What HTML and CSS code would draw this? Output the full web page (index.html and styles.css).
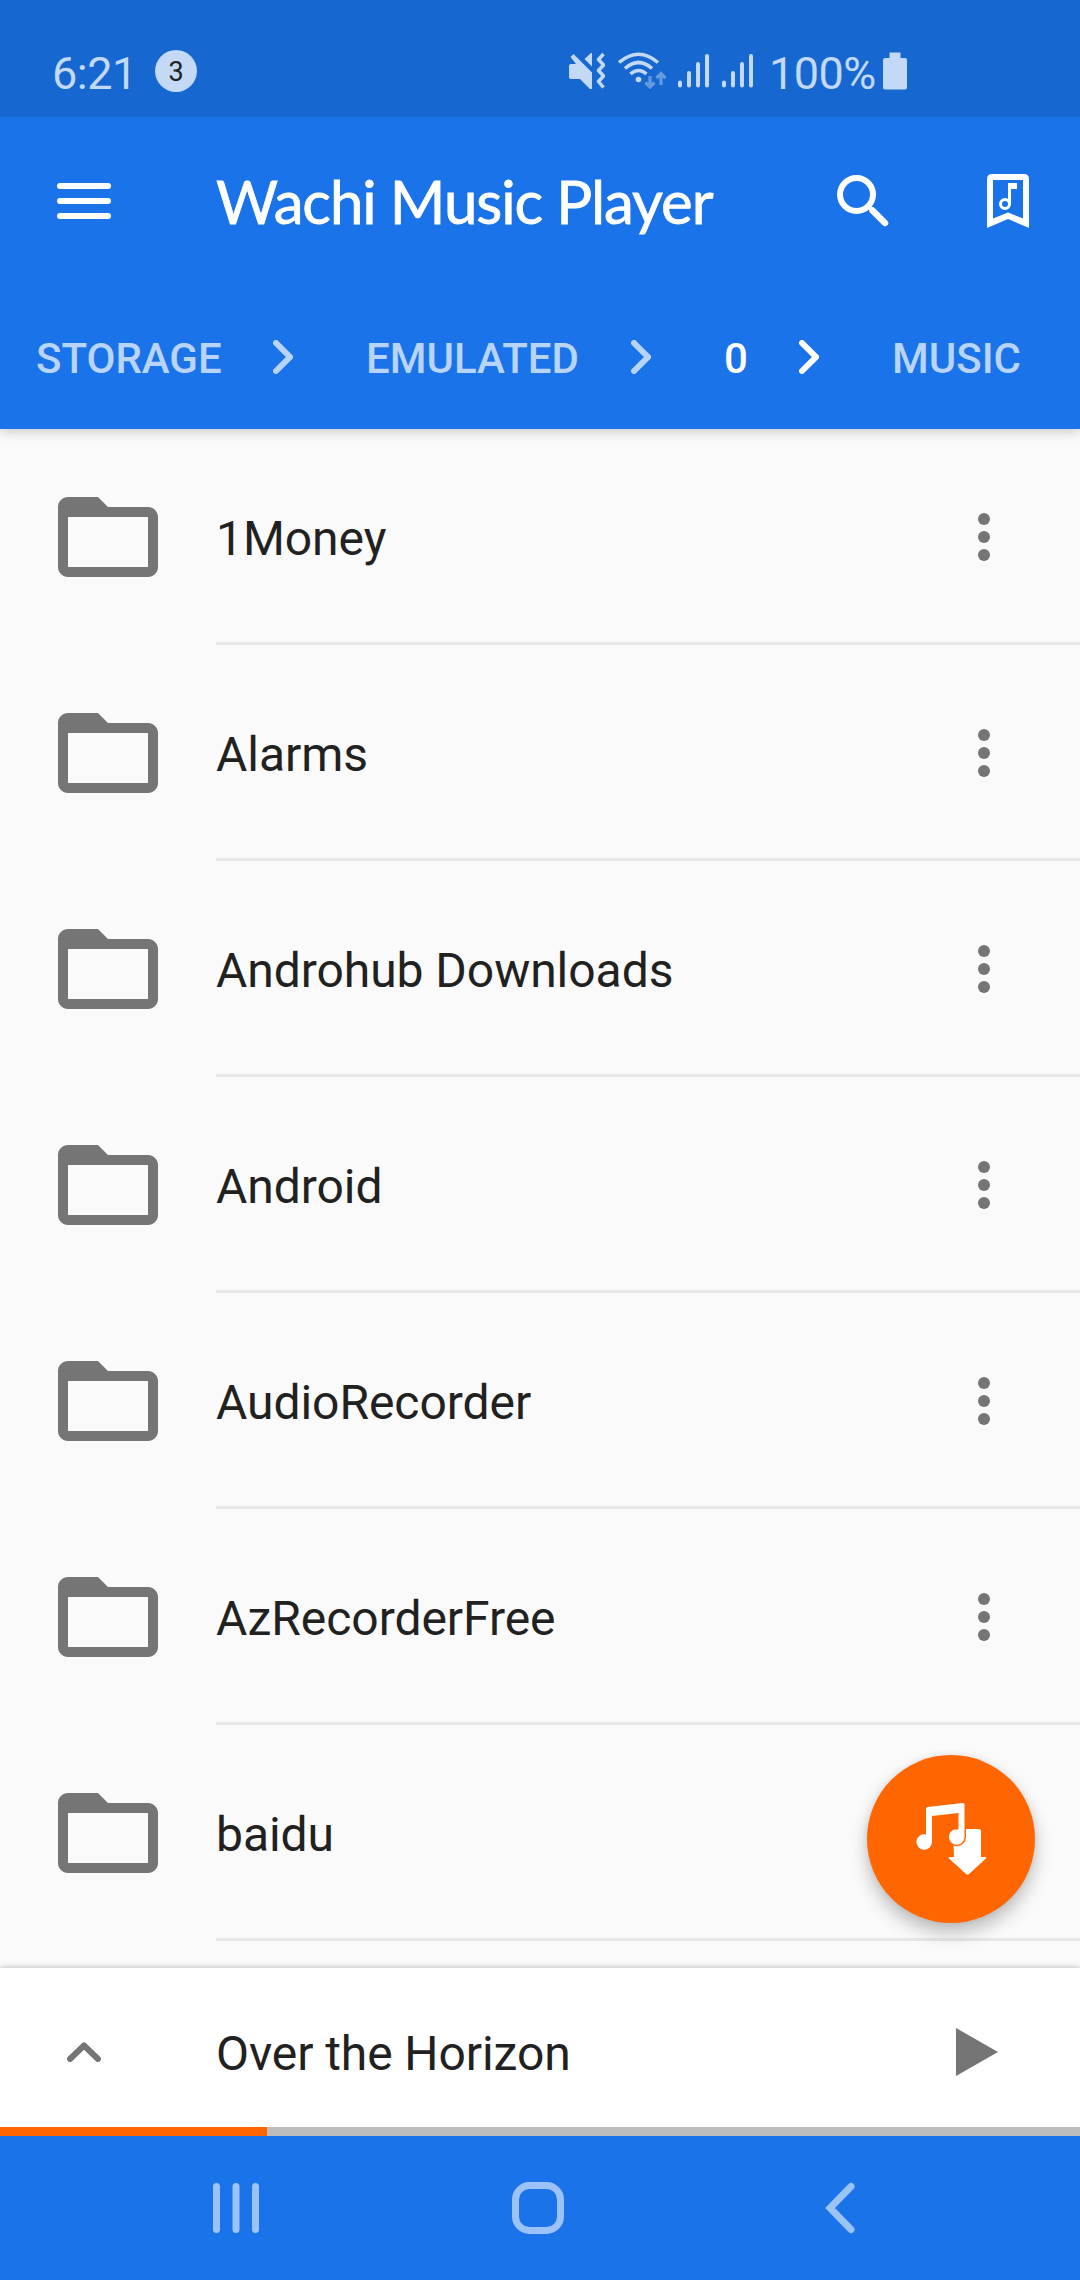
FILE: index.html
```html
<!DOCTYPE html>
<html lang="en">
<head>
<meta charset="utf-8">
<title>Wachi Music Player</title>
<link rel="stylesheet" href="styles.css">
</head>
<body>
<svg class="defs" width="0" height="0" aria-hidden="true">
  <symbol id="folder" viewBox="0 0 24 24"><path d="M20 6h-8l-2-2H4c-1.100 0-2 .9-2 2v12c0 1.100.9 2 2 2h16c1.100 0 2-.9 2-2V8c0-1.100-.9-2-2-2zm0 12H4V8h16v10z"/></symbol>
  <symbol id="more" viewBox="0 0 12 48"><circle cx="6" cy="6" r="6"/><circle cx="6" cy="24" r="6"/><circle cx="6" cy="42" r="6"/></symbol>
  <symbol id="chevron" viewBox="0 0 20 34"><path d="M3 3l14 14L3 31" fill="none" stroke="currentColor" stroke-width="6" stroke-linecap="round"/></symbol>
  <symbol id="signal" viewBox="0 0 32 36"><path d="M2 29.500V32.500M11 20V32.500M20 11V32.500M29 3V32.500" fill="none" stroke="currentColor" stroke-width="4" stroke-linecap="round"/></symbol>
</svg>

<header class="top">
  <div class="status">
    <span class="time">6:21</span>
    <span class="count">3</span>
    <div class="status-icons">
      <svg class="mute" viewBox="0 0 36 38" width="36" height="38"><path fill="currentColor" d="M0 14q0-2 2-2h5L1.500 5 4.500 2 23 20.500V37h-2L11 27H2q-2 0-2-2zM15.500 7L22 1h1v13.500z"/><path d="M34.500 2l-5 5.500 5 5.500-5 5.500 5 5.500-5 5.500 5 6" fill="none" stroke="currentColor" stroke-width="3.500" stroke-linejoin="round"/></svg>
      <svg class="wifi" viewBox="0 0 48 38" width="48" height="38"><g fill="none" stroke="currentColor" stroke-width="3.600"><path d="M1 10.500Q20.500-6 40 10.500M7 16.500Q20.500 4.500 34 16.500M12.500 22Q20.500 15 28.500 22"/></g><circle cx="20.500" cy="27.500" r="2.800" fill="currentColor"/><g class="traffic" fill="none" stroke="currentColor" stroke-width="3.200"><path d="M32 24v10M27.500 30.500l4.500 4.500 4.500-4.500M43 33V22M38.500 26l4.500-4.500 4.500 4.500"/></g></svg>
      <svg class="signal" width="32" height="36"><use href="#signal"/></svg>
      <svg class="signal second" width="32" height="36"><use href="#signal"/></svg>
      <span class="percent">100%</span>
      <svg class="battery" viewBox="0 0 24 38" width="24" height="38"><path fill="currentColor" d="M6.500 0.500h11V6H22q2 0 2 2v27.500q0 2-2 2H2q-2 0-2-2V8q0-2 2-2h4.500z"/></svg>
    </div>
  </div>
  <div class="toolbar">
    <svg class="menu" viewBox="0 0 54 36" width="54" height="36"><path d="M3 3h48M3 18h48M3 33h48" stroke="#fff" stroke-width="6" stroke-linecap="round"/></svg>
    <h1>Wachi Music Player</h1>
    <svg class="search" viewBox="0 0 52 52" width="52" height="52"><circle cx="19.500" cy="19.500" r="16.500" fill="none" stroke="#fff" stroke-width="6"/><path d="M31 31l4.500 4.500" stroke="#fff" stroke-width="4"/><path d="M35.500 35.500L48 48" stroke="#fff" stroke-width="6.500" stroke-linecap="round"/></svg>
    <svg class="bookmark" viewBox="0 0 42 54" width="42" height="54"><path fill="#fff" fill-rule="evenodd" d="M5 0h32q5 0 5 5v49l-21-9-21 9V5q0-5 5-5zM6 6v38.500l15-6 15 6V6z"/><circle cx="18" cy="30" r="4.500" fill="none" stroke="#fff" stroke-width="3"/><path fill="#fff" d="M21 9h9v6h-6v15h-3z"/></svg>
  </div>
  <nav class="crumbs">
    <span class="c1">STORAGE</span><svg width="20" height="34"><use href="#chevron"/></svg>
    <span class="c2">EMULATED</span><svg width="20" height="34"><use href="#chevron"/></svg>
    <span class="c3 current">0</span><svg class="current" width="20" height="34"><use href="#chevron"/></svg>
    <span class="c4">MUSIC</span>
  </nav>
</header>

<main class="list">
  <div class="row"><svg class="folder"><use href="#folder"/></svg><div class="cell"><span>1Money</span><svg class="more"><use href="#more"/></svg></div></div>
  <div class="row"><svg class="folder"><use href="#folder"/></svg><div class="cell"><span>Alarms</span><svg class="more"><use href="#more"/></svg></div></div>
  <div class="row"><svg class="folder"><use href="#folder"/></svg><div class="cell"><span>Androhub Downloads</span><svg class="more"><use href="#more"/></svg></div></div>
  <div class="row"><svg class="folder"><use href="#folder"/></svg><div class="cell"><span>Android</span><svg class="more"><use href="#more"/></svg></div></div>
  <div class="row"><svg class="folder"><use href="#folder"/></svg><div class="cell"><span>AudioRecorder</span><svg class="more"><use href="#more"/></svg></div></div>
  <div class="row"><svg class="folder"><use href="#folder"/></svg><div class="cell"><span>AzRecorderFree</span><svg class="more"><use href="#more"/></svg></div></div>
  <div class="row"><svg class="folder"><use href="#folder"/></svg><div class="cell"><span>baidu</span></div></div>
  <button class="fab" aria-label="Download music">
    <svg viewBox="0 0 70 72" width="70" height="72"><path fill="#fff" d="M37 26h26q2 0 2 2v26h4.500q1.500 0.500 0.500 1.500L53 71q-1.500 1-3 0L33 55.500q-1-1 0.500-1.500H38z"/><path fill="#fff" stroke="#f60" stroke-width="3" paint-order="stroke" d="M10 5.500q0-1.500 1.500-1.500L47 0q1.500 0 1.500 1.500V34a7.800 7.800 0 1 1-6-7.600V10L16 13v26a7.800 7.800 0 1 1-6-7.600z"/></svg>
  </button>
</main>

<section class="player">
  <svg class="up" viewBox="0 0 34 20" width="34" height="20"><path d="M3 17L17 3.500 31 17" fill="none" stroke="#757575" stroke-width="6" stroke-linecap="round" stroke-linejoin="round"/></svg>
  <span class="track">Over the Horizon</span>
  <svg class="play" viewBox="0 0 42 48" width="42" height="48"><path d="M0 0l42 24L0 48z" fill="#757575"/></svg>
</section>
<div class="progress"><div class="played"></div></div>

<footer class="navbar">
  <svg class="recents" viewBox="0 0 48 52" width="48" height="52"><path d="M4.500 4.500v43M24 4.500v43M43.500 4.500v43"/></svg>
  <svg class="home" viewBox="0 0 54 54" width="54" height="54"><rect x="4.500" y="4.500" width="45" height="45" rx="14"/></svg>
  <svg class="back" viewBox="0 0 30 52" width="30" height="52"><path d="M26 4.500L5 26l21 21.500"/></svg>
</footer>
</body>
</html>
```
FILE: styles.css
```css
* { box-sizing: border-box; }
body {
  margin: 0;
  width: 1080px;
  height: 2280px;
  display: flex;
  flex-direction: column;
  overflow: hidden;
  background: #fafafa;
  color: #212121;
  font-family: Roboto, sans-serif;
}
svg { display: block; flex: none; }
.defs { position: absolute; }
span { white-space: nowrap; }

.top {
  height: 429px;
  background: #1a73e8;
  box-shadow: 0 2px 12px rgba(0, 0, 0, .22);
  position: relative;
  z-index: 1;
}
.status {
  height: 117px;
  padding: 25px 0 0 52px;
  background: #1767d0;
  color: #c3d9f5;
  display: flex;
  align-items: center;
}
.time { width: 103px; padding-top: 4px; font-size: 45px; letter-spacing: -.5px; }
.count {
  width: 42px;
  height: 42px;
  border-radius: 50%;
  background: #c3d9f5;
  color: #222;
  font-size: 27px;
  line-height: 44px;
  text-align: center;
}
.status-icons { display: flex; align-items: center; margin-left: 372px; }
.wifi { margin-left: 13px; }
.traffic { opacity: .45; }
.signal { margin-left: 12px; }
.signal.second { margin-left: 12px; }
.percent { width: 110px; margin-left: 15px; padding-top: 4px; font-size: 45px; letter-spacing: -.5px; }
.battery { margin-left: 4px; }

.toolbar {
  height: 168px;
  display: flex;
  align-items: center;
  padding: 0 51px 0 57px;
}
h1 {
  margin: 0 0 0 105px;
  width: 621px;
  color: #fff;
  font: 400 60px/72px Lato, sans-serif;
  letter-spacing: -1.1px;
  -webkit-text-stroke: .8px #fff;
  white-space: nowrap;
}
.bookmark { margin-left: 98px; }

.crumbs {
  height: 144px;
  display: flex;
  align-items: center;
  padding-left: 36px;
  color: #b9d4f9;
  font-size: 42px;
  font-weight: 500;
}
.crumbs .current { color: #fff; }
.crumbs span { padding-top: 3px; }
.c1 { width: 237px; }
.c2 { width: 265px; margin-left: 73px; }
.c3 { width: 75px; margin-left: 73px; }
.c4 { margin-left: 73px; }

.list { height: 1539px; position: relative; }
.row { height: 216px; display: flex; align-items: center; padding-left: 48px; }
.folder { width: 120px; height: 120px; fill: #757575; }
.cell {
  flex: 1;
  height: 216px;
  margin-left: 48px;
  padding: 3px 90px 0 0;
  border-bottom: 3px solid #e8e8e8;
  display: flex;
  align-items: center;
  justify-content: space-between;
  font-size: 48px;
  letter-spacing: -.05px;
}
.cell span { padding-top: 3px; }
.more { width: 12px; height: 48px; fill: #757575; }
.fab {
  position: absolute;
  right: 45px;
  bottom: 45px;
  width: 168px;
  height: 168px;
  padding: 0;
  border: 0;
  border-radius: 50%;
  background: #f60;
  box-shadow: 0 10px 18px rgba(0, 0, 0, .24), 0 0 6px rgba(0, 0, 0, .08);
  display: flex;
  align-items: center;
  justify-content: center;
}

.player {
  height: 159px;
  background: #fff;
  box-shadow: 0 0 6px rgba(0, 0, 0, .3);
  display: flex;
  align-items: center;
  padding: 9px 82px 0 67px;
  font-size: 48px;
  position: relative;
}
.track { flex: 1; margin-left: 115px; padding-top: 2px; letter-spacing: -.08px; }
.progress { height: 9px; background: #bdbdbd; position: relative; }
.played { width: 267px; height: 9px; background: #f60; }

.navbar {
  height: 144px;
  background: #1a73e8;
  display: flex;
  align-items: center;
  padding-left: 212px;
  position: relative;
}
.navbar svg { fill: none; stroke: #9cc3f7; stroke-width: 7; stroke-linecap: round; }
.home { margin-left: 251px; }
.back { margin-left: 260px; }
```
